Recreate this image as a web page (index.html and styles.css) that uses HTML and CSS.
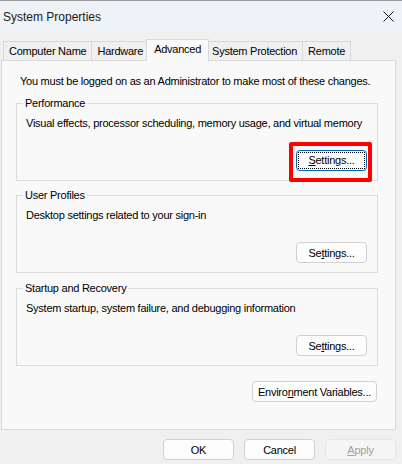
FILE: index.html
```html
<!DOCTYPE html>
<html lang="en">
  <head>
    <meta charset="UTF-8" />
    <meta name="viewport" content="width=device-width, initial-scale=1.0" />
    <title>System Properties</title>
    <link rel="stylesheet" href="styles.css">
  </head>
  <body>
    <div class="window">
      <div class="titlebar">
        <span class="title">System Properties</span>
        <button class="close" aria-label="Close">
          <svg width="11" height="11" viewBox="0 0 11 11">
            <path d="M0.5 0.5 L10.5 10.5 M10.5 0.5 L0.5 10.5" stroke="#1b1b1b" stroke-width="1" fill="none" />
          </svg>
        </button>
      </div>

      <div class="tabs">
        <div class="tab">Computer Name</div>
        <div class="tab">Hardware</div>
        <div class="tab active">Advanced</div>
        <div class="tab">System Protection</div>
        <div class="tab">Remote</div>
      </div>

      <div class="panel">
        <p class="intro">You must be logged on as an Administrator to make most of these changes.</p>

        <fieldset class="group">
          <legend>Performance</legend>
          <p class="desc">Visual effects, processor scheduling, memory usage, and virtual memory</p>
          <div class="row">
            <span class="highlight">
              <button class="btn focused"><span class="focus-ring"><u>S</u>ettings...</span></button>
            </span>
          </div>
        </fieldset>

        <fieldset class="group">
          <legend>User Profiles</legend>
          <p class="desc">Desktop settings related to your sign-in</p>
          <div class="row">
            <button class="btn">Se<u>t</u>tings...</button>
          </div>
        </fieldset>

        <fieldset class="group">
          <legend>Startup and Recovery</legend>
          <p class="desc">System startup, system failure, and debugging information</p>
          <div class="row">
            <button class="btn">Se<u>t</u>tings...</button>
          </div>
        </fieldset>

        <div class="row env">
          <button class="btn wide">Enviro<u>n</u>ment Variables...</button>
        </div>
      </div>

      <div class="footer">
        <button class="btn">OK</button>
        <button class="btn">Cancel</button>
        <button class="btn" disabled><u>A</u>pply</button>
      </div>
    </div>
  </body>
</html>
```

FILE: styles.css
```css
body {
  margin: 0;
  padding: 0;
  background-color: #f0f0f0;
  font-family: "Liberation Sans", Arial, sans-serif;
  font-size: 11px;
  line-height: 14px;
  letter-spacing: -0.25px;
  color: #000;
}

.window {
  width: 402px;
  height: 464px;
  overflow: hidden;
  border-top: 1px solid #9a9a9a;
  box-sizing: border-box;
}

/* Title bar */
.titlebar {
  height: 31px;
  background-color: #eef3f8;
  display: flex;
  align-items: center;
  justify-content: space-between;
  padding: 0 8px 0 3px;
}

.title {
  font-size: 12px;
  letter-spacing: 0;
  color: #1a1a1a;
}

.close {
  background: transparent;
  border: none;
  padding: 0;
  width: 11px;
  height: 11px;
  display: flex;
}

/* Tabs */
.tabs {
  display: flex;
  align-items: flex-end;
  height: 28px;
  padding-left: 3px;
}

.tab {
  height: 18px;
  line-height: 18px;
  padding: 0 5px;
  border: 1px solid #d9d9d9;
  border-bottom: none;
  margin-left: -1px;
  background-color: #f0f0f0;
  color: #000;
}

.tab:first-child {
  margin-left: 0;
}

.tab.active {
  height: 21px;
  line-height: 19px;
  background-color: #f9f9f9;
  margin: 0 -2px 0 -3px;
  padding: 0 7px;
  position: relative;
  z-index: 1;
  top: 1px;
}

/* Tab page */
.panel {
  height: 370px;
  margin: 0 6px 0 1px;
  box-sizing: border-box;
  background-color: #f9f9f9;
  border: 1px solid #d9d9d9;
  padding: 13px 17px 0 13px;
}

.intro {
  margin: 0 0 8px 5px;
}

.group {
  margin: 0 0 8px 1px;
  padding: 6px 10px 9px 6px;
  border: 1px solid #dcdcdc;
  min-width: 0;
}

.group:first-of-type {
  margin-bottom: 7px;
}

.group legend {
  padding: 0 2px;
}

.desc {
  margin: 0 0 20px 3px;
}

.row {
  display: flex;
  justify-content: flex-end;
}

/* Buttons */
.btn {
  font-family: inherit;
  font-size: 11px;
  letter-spacing: inherit;
  width: 71px;
  height: 21px;
  padding: 0;
  background-color: #fdfdfd;
  border: 1px solid #d0d0d0;
  border-radius: 4px;
  color: #000;
}

.btn:disabled {
  background-color: #f5f5f5;
  border-color: #e5e5e5;
  color: #a0a0a0;
}

.btn.wide {
  width: 125px;
}

.btn.focused {
  border: 1px solid #0067c0;
  padding: 1px;
  display: flex;
}

.focus-ring {
  flex: 1;
  border: 1px dotted #000;
  line-height: 15px;
}

/* red marker drawn round the Performance settings button */
.highlight {
  border: 4px solid #ff0000;
  border-radius: 2px;
  padding: 4px 1px 7px 3px;
  margin: -8px -5px -11px 0;
  position: relative;
  z-index: 1;
}

.env {
  margin: 15px 1px 0 0;
}

/* Dialog buttons */
.footer {
  display: flex;
  justify-content: flex-end;
  gap: 10px;
  margin-top: 9px;
  padding-right: 6px;
}
```
